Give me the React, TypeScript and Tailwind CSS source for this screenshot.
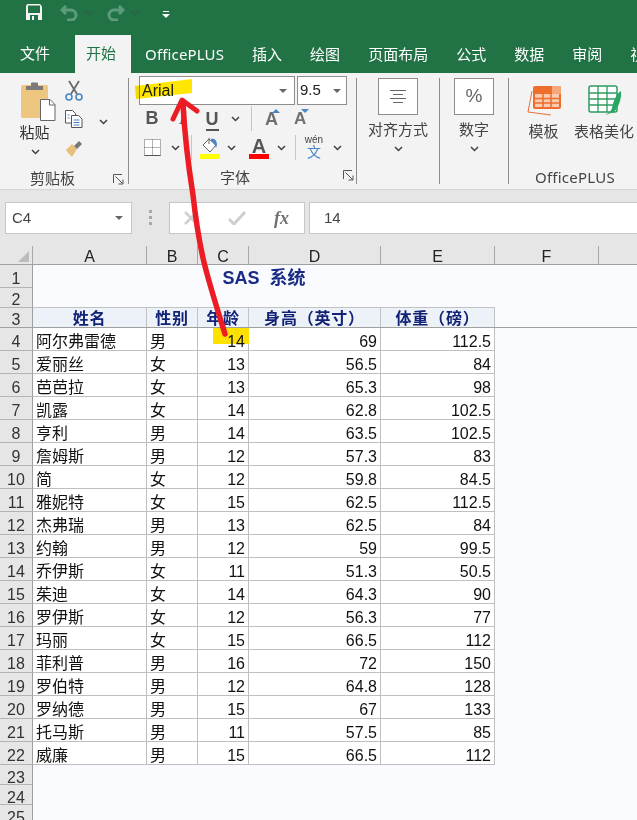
import React from "react";

const rows: [string, string, string, string, string][] = [
  ["阿尔弗雷德", "男", "14", "69", "112.5"],
  ["爱丽丝", "女", "13", "56.5", "84"],
  ["芭芭拉", "女", "13", "65.3", "98"],
  ["凯露", "女", "14", "62.8", "102.5"],
  ["亨利", "男", "14", "63.5", "102.5"],
  ["詹姆斯", "男", "12", "57.3", "83"],
  ["简", "女", "12", "59.8", "84.5"],
  ["雅妮特", "女", "15", "62.5", "112.5"],
  ["杰弗瑞", "男", "13", "62.5", "84"],
  ["约翰", "男", "12", "59", "99.5"],
  ["乔伊斯", "女", "11", "51.3", "50.5"],
  ["茱迪", "女", "14", "64.3", "90"],
  ["罗伊斯", "女", "12", "56.3", "77"],
  ["玛丽", "女", "15", "66.5", "112"],
  ["菲利普", "男", "16", "72", "150"],
  ["罗伯特", "男", "12", "64.8", "128"],
  ["罗纳德", "男", "15", "67", "133"],
  ["托马斯", "男", "11", "57.5", "85"],
  ["威廉", "男", "15", "66.5", "112"],
];

const tabs = ["OfficePLUS", "插入", "绘图", "页面布局", "公式", "数据", "审阅", "视图"];

function Chevron({ className = "" }: { className?: string }) {
  return (
    <svg width="9" height="6" viewBox="0 0 9 6" className={className}>
      <path d="M1 1l3.5 3.5L8 1" fill="none" stroke="#404040" strokeWidth="1.5" />
    </svg>
  );
}

function Launcher() {
  return (
    <svg width="11" height="11" viewBox="0 0 11 11">
      <path d="M.5 9V.5H9" fill="none" stroke="#555" />
      <path d="M2.5 2.5l7 7M5.5 10h4.5V5.500" fill="none" stroke="#555" />
    </svg>
  );
}

function Caret() {
  return <div className="h-0 w-0 border-x-[4px] border-t-[4px] border-x-transparent border-t-[#666]" />;
}

function RowHead({ n, h, lead = "leading-[16px]" }: { n: number; h: string; lead?: string }) {
  return (
    <div className={`flex w-[33px] shrink-0 items-end justify-center border-r border-b border-r-[#9f9f9f] border-b-[#b4b4b4] bg-[#e6e6e6] text-[16px] text-[#333] ${lead} ${h}`}>
      {n}
    </div>
  );
}

function ColHead({ label, w }: { label: string; w: string }) {
  return (
    <div className={`flex shrink-0 items-end justify-center border-r border-[#a8a8a8] text-[16px] leading-[15px] text-[#222] ${w}`}>
      {label}
    </div>
  );
}

function HeadCell({ label, w }: { label: string; w: string }) {
  return (
    <div className={`flex h-full shrink-0 items-end justify-center border-r border-[#c2c2c2] bg-[#edf2f9] text-[16px] leading-[16px] font-bold tracking-[0.8px] text-[#112277] ${w}`}>
      {label}
    </div>
  );
}

function DataRow({ n, row }: { n: number; row: [string, string, string, string, string] }) {
  const cell = "flex h-full shrink-0 items-end border-r border-b border-[#bfbfbf] bg-white text-[16px] leading-[17px] text-[#111]";
  return (
    <div className="flex h-[23px]">
      <RowHead n={n} h="h-[23px]" />
      <div className={`${cell} w-[114px] pl-[3px]`}>{row[0]}</div>
      <div className={`${cell} w-[51px] pl-[3px]`}>{row[1]}</div>
      <div className={`${cell} relative w-[51px] justify-end pr-[3px]`}>
        {n === 4 && <div className="absolute top-0 left-[15px] h-[16px] w-[36px] bg-[#ffe100]" />}
        <span className="relative">{row[2]}</span>
      </div>
      <div className={`${cell} w-[132px] justify-end pr-[3px]`}>{row[3]}</div>
      <div className={`${cell} w-[114px] justify-end pr-[3px]`}>{row[4]}</div>
    </div>
  );
}

export default function App() {
  return (
    <div className="relative h-[820px] w-[637px] overflow-hidden bg-[#f9fbff] font-['Liberation_Sans','Noto_Sans_CJK_SC',sans-serif]">
      {/* title bar */}
      <div className="flex h-[35px] items-start bg-[#217346] pt-[4px] pl-[26px]">
        <svg width="16" height="16" viewBox="0 0 16 16">
          <path d="M0 1.500V16h16V2.500L14 0H1.500z" fill="#f3f3f3" />
          <rect x="2" y="1.500" width="12" height="7.500" fill="#217346" />
          <rect x="4" y="11" width="8" height="5" fill="#217346" />
          <rect x="6" y="12" width="2" height="4" fill="#f3f3f3" />
        </svg>
        <svg width="18" height="16" viewBox="0 0 18 16" className="mt-[1px] ml-[18px]">
          <path d="M6 1L2 5l4 4M2.500 5H11a5 5 0 0 1 0 10H7" fill="none" stroke="#5c9c7c" strokeWidth="3" />
        </svg>
        <Chevron className="mt-[6px] ml-[6px] opacity-40" />
        <svg width="18" height="16" viewBox="0 0 18 16" className="mt-[1px] ml-[14px]">
          <path d="M12 1l4 4-4 4M15.500 5H7a5 5 0 0 0 0 10h4" fill="none" stroke="#5c9c7c" strokeWidth="3" />
        </svg>
        <Chevron className="mt-[6px] ml-[6px] opacity-40" />
        <svg width="8" height="8" viewBox="0 0 8 8" className="mt-[7px] ml-[22px]">
          <path d="M1 .5h6" stroke="#fff" />
          <path d="M0 3h8L4 7z" fill="#fff" />
        </svg>
      </div>

      {/* tabs */}
      <div className="flex h-[38px] items-stretch overflow-hidden whitespace-nowrap bg-[#217346] text-[15px] text-white">
        <div className="ml-[6px] flex items-center px-[14px]">文件</div>
        <div className="ml-[11px] flex items-center bg-[#f3f3f3] pr-[15px] pl-[11px] text-[#217346]">开始</div>
        {tabs.map((t) => (
          <div
            key={t}
            className={`flex items-center px-[14px] font-['Noto_Sans','Noto_Sans_CJK_SC',sans-serif] ${t === "OfficePLUS" ? "tracking-[0.15px]" : ""}`}
          >
            {t}
          </div>
        ))}
      </div>

      {/* ribbon */}
      <div className="flex h-[117px] overflow-hidden border-b border-[#d4d4d4] bg-[#f3f3f3] text-[15px] text-[#444]">
        {/* clipboard */}
        <div className="flex w-[128px] shrink-0 flex-col">
          <div className="flex h-[92px] pt-[7px]">
            <div className="flex w-[65px] shrink-0 flex-col items-center pl-[4px]">
              <svg width="36" height="40" viewBox="0 0 36 40" className="mt-[1px] ml-[6px]">
                <rect x="1" y="4" width="27" height="33" rx="1.500" fill="#edc67f" />
                <path d="M6 9V5h5V2.500a1 1 0 0 1 1-1h5a1 1 0 0 1 1 1V5h5v4z" fill="#7a7a7a" />
                <path d="M20.500 18.500H30l5 5v16H20.500z" fill="#fff" stroke="#666" />
                <path d="M29.500 18.500v5.500h5.500" fill="none" stroke="#666" />
              </svg>
              <div className="mt-[2px] leading-[20px] text-[#333]">粘贴</div>
              <Chevron className="mt-[6px] ml-[2px]" />
            </div>
            <div className="flex w-[18px] shrink-0 flex-col items-center">
              <svg width="18" height="21" viewBox="0 0 18 21">
                <path d="M4 1l8 13M14 1L6 14" stroke="#6b6b6b" strokeWidth="1.800" fill="none" />
                <circle cx="4" cy="17" r="3" fill="none" stroke="#4a86c5" strokeWidth="1.600" />
                <circle cx="14" cy="17" r="3" fill="none" stroke="#4a86c5" strokeWidth="1.600" />
              </svg>
              <svg width="18" height="18" viewBox="0 0 18 18" className="mt-[9px]">
                <path d="M.5.500h7l3 3V13H.5z" fill="#fff" stroke="#555" />
                <path d="M6.500 5.500h7l3.500 3.500v8.500H6.500z" fill="#fff" stroke="#555" />
                <path d="M2.500 5h2M2.500 8h2M8.500 10h6M8.500 12.500h6M8.500 15h6" stroke="#4a86c5" />
              </svg>
              <svg width="18" height="18" viewBox="0 0 18 18" className="mt-[12px]">
                <path d="M1 10l6-6 5 5-5 8C5 15 2 12 1 10z" fill="#e9c07a" />
                <path d="M9 6l5-5 3 3-5 5z" fill="#777" />
              </svg>
            </div>
            <Chevron className="mt-[39px] ml-[16px]" />
          </div>
          <div className="flex flex-1 items-start">
            <div className="w-[113px] pt-[4px] pr-[8px] text-center leading-[20px]">剪贴板</div>
            <div className="pt-[9px]"><Launcher /></div>
          </div>
        </div>
        <div className="my-[5px] w-px shrink-0 bg-[#8c8c8c]" />

        {/* font */}
        <div className="flex w-[227px] shrink-0 flex-col">
          <div className="flex h-[29px] gap-[2px] pt-[3px] pl-[10px]">
            <div className="flex h-[29px] w-[156px] items-center justify-between border border-[#8e8e8e] bg-white pr-[7px] pl-[2px] text-[16px] text-[#222]">
              <span>Arial</span>
              <Caret />
            </div>
            <div className="flex h-[29px] w-[50px] items-center justify-between border border-[#8e8e8e] bg-white pr-[5px] pl-[2px] text-[#222]">
              <span>9.5</span>
              <Caret />
            </div>
          </div>
          <div className="mt-[4px] flex h-[25px] items-center pl-[8px] text-[#555]">
            <span className="w-[30px] text-center text-[18px] font-bold">B</span>
            <span className="w-[30px] text-center font-['Liberation_Serif',serif] text-[18px] italic">I</span>
            <span className="w-[30px] text-center text-[18px] leading-[18px] font-bold"><span className="border-b-2 border-[#555]">U</span></span>
            <Chevron className="ml-[4px]" />
            <div className="ml-[11px] h-[25px] w-px bg-[#c6c6c6]" />
            <span className="relative ml-[13px] text-[18px] leading-[18px] font-bold text-[#707070]">
              A
              <span className="absolute -top-[1px] left-[7px] h-0 w-0 border-x-[4px] border-b-[4px] border-x-transparent border-b-[#4a86c5]" />
            </span>
            <span className="relative ml-[16px] text-[17px] leading-[18px] font-bold text-[#707070]">
              A
              <span className="absolute -top-[1px] left-[7px] h-0 w-0 border-x-[4px] border-t-[4px] border-x-transparent border-t-[#4a86c5]" />
            </span>
          </div>
          <div className="mt-[4px] flex h-[25px] items-center pl-[15px]">
            <svg width="17" height="17" viewBox="0 0 17 17">
              <path d="M.5.500h16v16H.5z" fill="#fff" stroke="#666" strokeDasharray="1 1" />
              <path d="M8.500.5v16M.5 8.500h16" stroke="#666" strokeDasharray="1 1" />
              <path d="M.5 16.500h16" stroke="#555" />
            </svg>
            <Chevron className="ml-[10px]" />
            <div className="ml-[11px] h-[25px] w-px bg-[#c6c6c6]" />
            <div className="ml-[8px] flex w-[20px] flex-col items-center">
              <svg width="20" height="17" viewBox="0 0 20 17">
                <path d="M9 2l7 6-6 7-7-7z" fill="#fff" stroke="#666" />
                <path d="M9 1v6" stroke="#666" />
                <path d="M11 2c4-1 6 2 6 6l-1 3c-1-3-2-5-5-7z" fill="#4a86c5" />
              </svg>
              <div className="h-[5px] w-[20px] bg-[#ffff00]" />
            </div>
            <Chevron className="ml-[7px]" />
            <div className="ml-[13px] flex w-[20px] flex-col items-center">
              <span className="h-[17px] text-[20px] leading-[18px] font-bold text-[#555]">A</span>
              <div className="h-[5px] w-[20px] bg-[#ff0000]" />
            </div>
            <Chevron className="ml-[8px]" />
            <div className="ml-[9px] h-[25px] w-px bg-[#c6c6c6]" />
            <div className="ml-[10px] flex w-[16px] flex-col items-center">
              <span className="text-[10px] leading-[10px] text-[#444]">wén</span>
              <span className="text-[14px] leading-[15px] text-[#4a86c5]">文</span>
            </div>
            <Chevron className="ml-[11px]" />
          </div>
          <div className="flex flex-1 items-start">
            <div className="w-[214px] pt-[8px] pr-[2px] text-center leading-[20px]">字体</div>
            <div className="pt-[10px]"><Launcher /></div>
          </div>
        </div>
        <div className="my-[5px] w-px shrink-0 bg-[#8c8c8c]" />

        {/* alignment */}
        <div className="flex w-[82px] shrink-0 flex-col items-center pt-[5px]">
          <div className="flex h-[37px] w-[40px] flex-col items-center justify-center gap-[3px] border border-[#8c8c8c] bg-white">
            <div className="h-px w-[16px] bg-[#666]" />
            <div className="h-px w-[10px] bg-[#666]" />
            <div className="h-px w-[16px] bg-[#666]" />
            <div className="h-px w-[10px] bg-[#666]" />
          </div>
          <div className="mt-[5px] leading-[20px]">对齐方式</div>
          <Chevron className="mt-[6px]" />
        </div>
        <div className="my-[5px] w-px shrink-0 bg-[#8c8c8c]" />

        {/* number */}
        <div className="flex w-[68px] shrink-0 flex-col items-center pt-[5px]">
          <div className="flex h-[37px] w-[40px] items-center justify-center border border-[#8c8c8c] bg-white text-[19px] text-[#666]">%</div>
          <div className="mt-[5px] leading-[20px]">数字</div>
          <Chevron className="mt-[6px]" />
        </div>
        <div className="my-[5px] w-px shrink-0 bg-[#8c8c8c]" />

        {/* officeplus */}
        <div className="flex w-[128px] shrink-0 flex-col">
          <div className="flex h-[92px] pt-[12px]">
            <div className="flex w-[62px] shrink-0 flex-col items-center pl-[7px]">
              <svg width="34" height="31" viewBox="0 0 34 31">
                <path d="M5 6L1 27l23 3" fill="none" stroke="#e8703a" />
                <rect x="6" y="1" width="28" height="23" rx="2" fill="#ee6c2c" />
                <path d="M8 9h24v13H8z" fill="#f9cbb0" />
                <path d="M8 13.500h24M8 18h24M16 9v13M24 9v13" stroke="#ee6c2c" strokeWidth="1.500" />
                <rect x="25" y="1" width="9" height="8" fill="#f6a77a" />
              </svg>
              <div className="mt-[6px] leading-[20px]">模板</div>
            </div>
            <div className="flex w-[66px] shrink-0 flex-col items-start pl-[3px]">
              <svg width="34" height="31" viewBox="0 0 34 31" className="ml-[14px]">
                <rect x="1" y="1" width="28" height="26" rx="2" fill="#fff" stroke="#2f9a60" strokeWidth="1.500" />
                <path d="M1 8h28M1 14h28M1 20h26M10 1v26M19 1v26" stroke="#2f9a60" strokeWidth="1.300" />
                <path d="M33 6c1 8-3 17-7 21l-9 3c3-2 6-3 7-7 1-6 4-14 9-17z" fill="#29a566" />
              </svg>
              <div className="mt-[6px] whitespace-nowrap leading-[20px]">表格美化</div>
            </div>
          </div>
          <div className="pt-[2px] pl-[4px] text-center font-['Noto_Sans',sans-serif] leading-[20px] tracking-[0.25px]">OfficePLUS</div>
        </div>
      </div>

      {/* formula bar */}
      <div className="flex h-[56px] items-start bg-[#e6e6e6] pt-[12px] text-[15px] text-[#444]">
        <div className="ml-[5px] flex h-[32px] w-[127px] items-center justify-between border border-[#c6c6c6] bg-white pr-[8px] pl-[6px]">
          <span>C4</span>
          <Caret />
        </div>
        <div className="mt-[8px] ml-[17px] flex flex-col gap-[3px]">
          <div className="h-[3px] w-[3px] bg-[#a8a8a8]" />
          <div className="h-[3px] w-[3px] bg-[#a8a8a8]" />
          <div className="h-[3px] w-[3px] bg-[#a8a8a8]" />
        </div>
        <div className="ml-[17px] flex h-[32px] w-[136px] items-center border border-[#c6c6c6] bg-white">
          <svg width="14" height="14" viewBox="0 0 14 14" className="ml-[14px]">
            <path d="M1 1l12 12M13 1L1 13" stroke="#cfcfcf" strokeWidth="2.500" />
          </svg>
          <svg width="18" height="14" viewBox="0 0 18 14" className="ml-[30px]">
            <path d="M1 8l5 5L17 1" fill="none" stroke="#cfcfcf" strokeWidth="3" />
          </svg>
          <span className="ml-[28px] font-['Liberation_Serif',serif] text-[18px] font-bold text-[#707070] italic">fx</span>
        </div>
        <div className="ml-[4px] flex h-[32px] flex-1 items-center border-y border-l border-[#c6c6c6] bg-white pl-[14px]">14</div>
      </div>

      {/* sheet */}
      <div className="flex h-[19px] border-b border-[#a0a0a0] bg-[#e6e6e6]">
        <div className="flex w-[33px] shrink-0 items-end justify-end border-r border-[#a8a8a8] pr-[3px] pb-[2px]">
          <svg width="11" height="11" viewBox="0 0 11 11">
            <path d="M11 0v11H0z" fill="#bcbcbc" />
          </svg>
        </div>
        <ColHead label="A" w="w-[114px]" />
        <ColHead label="B" w="w-[51px]" />
        <ColHead label="C" w="w-[51px]" />
        <ColHead label="D" w="w-[132px]" />
        <ColHead label="E" w="w-[114px]" />
        <ColHead label="F" w="w-[104px]" />
      </div>

      <div className="flex h-[43px]">
        <div className="flex shrink-0 flex-col">
          <RowHead n={1} h="h-[23px]" />
          <RowHead n={2} h="h-[20px]" lead="leading-[14px]" />
        </div>
        <div className="flex h-[43px] w-[462px] shrink-0 items-start justify-center border-b border-[#c2c2c2] pt-[3px] text-[18px] leading-[20px] font-bold text-[#1a2b85] [word-spacing:5px]">
          SAS 系统
        </div>
      </div>

      <div className="flex h-[20px] border-b border-[#a0a0a0]">
        <RowHead n={3} h="h-[19px] border-b-0" lead="leading-[14px]" />
        <HeadCell label="姓名" w="w-[114px]" />
        <HeadCell label="性别" w="w-[51px]" />
        <HeadCell label="年龄" w="w-[51px]" />
        <HeadCell label="身高（英寸）" w="w-[132px]" />
        <HeadCell label="体重（磅）" w="w-[114px]" />
      </div>

      {rows.map((row, i) => (
        <DataRow key={i} n={i + 4} row={row} />
      ))}

      <RowHead n={23} h="h-[20px]" lead="leading-[13px]" />
      <RowHead n={24} h="h-[20px]" lead="leading-[13px]" />
      <RowHead n={25} h="h-[20px]" lead="leading-[13px]" />

      {/* hand-drawn annotations on top of the screenshot */}
      <svg width="637" height="820" viewBox="0 0 637 820" className="pointer-events-none absolute top-0 left-0">
        <path d="M135 86L192 79V93L136 99z" fill="#ffe600" className="mix-blend-multiply" />
        <path
          d="M183 104C185 140 189 170 193 195C196 222 199 240 203 258C208 280 216 305 225 334"
          fill="none"
          stroke="#eb1c24"
          strokeWidth="5.500"
          strokeLinecap="round"
        />
        <path d="M173 119L182 100L197 111" fill="none" stroke="#eb1c24" strokeWidth="5" strokeLinecap="round" strokeLinejoin="round" />
      </svg>
    </div>
  );
}
